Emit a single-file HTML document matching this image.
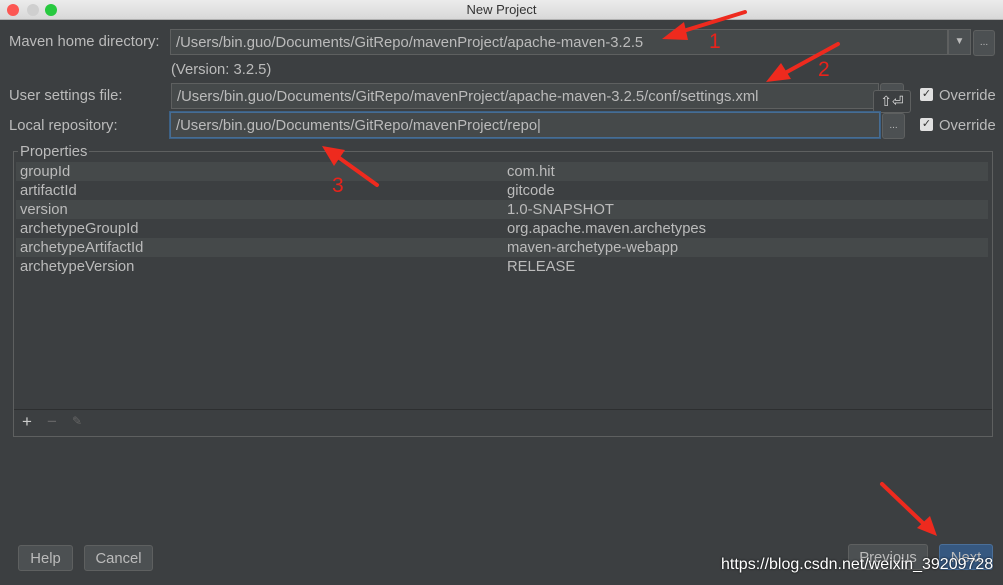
<!DOCTYPE html><html><head><style>
*{margin:0;padding:0;box-sizing:border-box}
body{width:1003px;height:585px;background:#3c3f41;font-family:"Liberation Sans",sans-serif;font-size:14.8px;color:#bbbbbb;position:relative;overflow:hidden}
.a{position:absolute}
.tb{left:0;top:0;width:1003px;height:20px;background:linear-gradient(#ececec,#d8d8d8);border-bottom:1px solid #b0b0b0;color:#333;font-size:13px;text-align:center;line-height:19px}
.dot{top:4px;width:12px;height:12px;border-radius:50%}
.f{background:#45494a;border:1px solid #5e6060;height:26px;line-height:26px;padding-left:5px;color:#bbb;white-space:nowrap;overflow:hidden}
.lbl{left:9px;color:#bbb}
.row{left:16px;width:972px;height:19px;line-height:20px}
.row span{position:absolute;left:4px}.row b{position:absolute;left:491px;font-weight:normal}
.btn{height:26px;border:1px solid #5e6060;background:#4c5052;border-radius:3px;text-align:center;line-height:26px;color:#bbb}
.red{color:#e8231b;font-size:21px}
.chk{width:13px;height:13px;background:#e0e0e0;border-radius:2px;color:#333;font-size:11px;line-height:13px;text-align:center}
</style></head><body>
<div class="a tb">New Project</div>
<div class="a dot" style="left:7px;background:#fc5753"></div>
<div class="a dot" style="left:27px;background:#cfcfcf"></div>
<div class="a dot" style="left:45px;background:#27c93f"></div>

<div class="a lbl" style="top:34px">Maven home directory:</div>
<div class="a f" style="left:170px;top:29px;width:778px">/Users/bin.guo/Documents/GitRepo/mavenProject/apache-maven-3.2.5</div>
<div class="a btn" style="left:948px;top:29px;width:23px;border-radius:0;font-size:10px;line-height:24px">▼</div>
<div class="a btn" style="left:973px;top:30px;width:22px;font-size:10px;line-height:24px">...</div>
<div class="a" style="left:171px;top:62px">(Version: 3.2.5)</div>

<div class="a lbl" style="top:88px">User settings file:</div>
<div class="a f" style="left:171px;top:83px;width:708px">/Users/bin.guo/Documents/GitRepo/mavenProject/apache-maven-3.2.5/conf/settings.xml</div>
<div class="a btn" style="left:880px;top:83px;width:24px"></div>
<div class="a" style="left:873px;top:90px;width:38px;height:23px;background:#3c3f41;border:1px solid #5e6060;border-radius:3px;color:#ddd;font-size:14px;text-align:center;line-height:21px">⇧⏎</div>
<div class="a chk" style="left:920px;top:88px">✓</div><div class="a" style="left:939px;top:88px">Override</div>

<div class="a lbl" style="top:118px">Local repository:</div>
<div class="a f" style="left:170px;top:112px;width:710px;border-color:#466d94;box-shadow:0 0 0 1px #3d6185">/Users/bin.guo/Documents/GitRepo/mavenProject/repo|</div>
<div class="a btn" style="left:882px;top:113px;width:23px;font-size:10px;line-height:24px">...</div>
<div class="a chk" style="left:920px;top:118px">✓</div><div class="a" style="left:939px;top:118px">Override</div>

<div class="a" style="left:13px;top:151px;width:980px;height:286px;border:1px solid #5e6060"></div>
<div class="a" style="left:18px;top:144px;background:#3c3f41;padding:0 2px">Properties</div>
<div class="a row" style="top:162px;background:#45494a"><span>groupId</span><b>com.hit</b></div>
<div class="a row" style="top:181px"><span>artifactId</span><b>gitcode</b></div>
<div class="a row" style="top:200px;background:#45494a"><span>version</span><b>1.0-SNAPSHOT</b></div>
<div class="a row" style="top:219px"><span>archetypeGroupId</span><b>org.apache.maven.archetypes</b></div>
<div class="a row" style="top:238px;background:#45494a"><span>archetypeArtifactId</span><b>maven-archetype-webapp</b></div>
<div class="a row" style="top:257px"><span>archetypeVersion</span><b>RELEASE</b></div>
<div class="a" style="left:14px;top:409px;width:978px;height:1px;background:#2d2f30"></div>
<div class="a" style="left:22px;top:412px;font-size:17px;color:#ccc">+</div>
<div class="a" style="left:47px;top:412px;font-size:17px;color:#666">−</div>
<div class="a" style="left:72px;top:414px;font-size:12px;color:#666">✎</div>

<div class="a btn" style="left:18px;top:545px;width:55px">Help</div>
<div class="a btn" style="left:84px;top:545px;width:69px">Cancel</div>
<div class="a btn" style="left:848px;top:544px;width:80px">Previous</div>
<div class="a btn" style="left:939px;top:544px;width:54px;background:#365880;border-color:#4a6f99">Next</div>
<div class="a" style="left:721px;top:556px;color:#fff;font-size:16px;text-shadow:0 0 2px #000">https://blog.csdn.net/weixin_39209728</div>

<svg class="a" style="left:0;top:0" width="1003" height="585">
<g stroke="#ee2a1e" stroke-width="4" fill="#ee2a1e" stroke-linecap="round">
<line x1="745" y1="12" x2="680" y2="32"/><polygon points="662,39 684,22 688,40" stroke="none"/>
<line x1="838" y1="44" x2="785" y2="73"/><polygon points="766,82 781,63 791,79" stroke="none"/>
<line x1="377" y1="185" x2="338" y2="157"/><polygon points="322,146 345,150 334,166" stroke="none"/>
<line x1="882" y1="484" x2="925" y2="525"/><polygon points="937,536 917,528 930,516" stroke="none"/>
</g></svg>
<div class="a red" style="left:709px;top:30px">1</div>
<div class="a red" style="left:818px;top:58px">2</div>
<div class="a red" style="left:332px;top:174px">3</div>
</body></html>
